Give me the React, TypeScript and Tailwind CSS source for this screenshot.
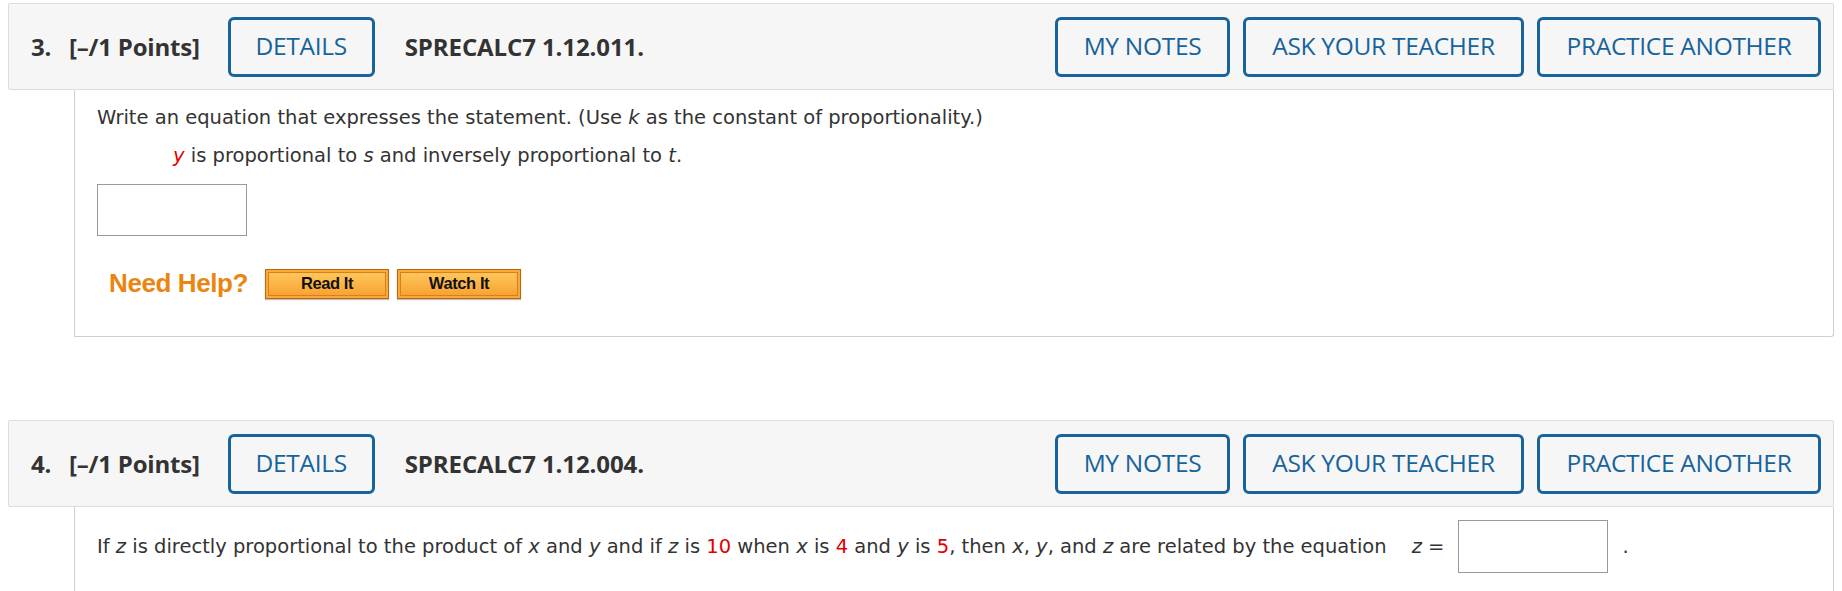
import React from 'react';

const blue = 'border-[#17639b] text-[#17639b]';

function HeaderButton({ label, w }: { label: string; w: string }) {
  return (
    <div
      className={`${w} h-[60px] shrink-0 flex items-center justify-center border-[3px] ${blue} rounded-[6px] bg-[#f6f6f6] text-[24.5px] font-medium font-['Open_Sans',sans-serif] tracking-[-0.3px]`}
    >
      {label}
    </div>
  );
}

function QuestionHeader({ num, code }: { num: string; code: string }) {
  return (
    <div className="h-[87px] flex items-center border border-[#dddddd] bg-[#f6f6f6] rounded-[2px] pl-[22px] pr-[12px] font-['Open_Sans',sans-serif] text-[#333333]">
      <span className="text-[24px] font-bold tracking-[-0.3px] w-[38px]">{num}</span>
      <span className="text-[24px] font-bold tracking-[-0.2px]">[–/1 Points]</span>
      <div className="ml-[28px]">
        <HeaderButton label="DETAILS" w="w-[147px]" />
      </div>
      <span className="ml-[30px] text-[24px] font-bold tracking-[-0.1px]">{code}</span>
      <div className="flex-1" />
      <div className="flex gap-[13px]">
        <HeaderButton label="MY NOTES" w="w-[175px]" />
        <HeaderButton label="ASK YOUR TEACHER" w="w-[281px]" />
        <HeaderButton label="PRACTICE ANOTHER" w="w-[284px]" />
      </div>
    </div>
  );
}

function HelpButton({ label }: { label: string }) {
  return (
    <div className="w-[124px] h-[30px] border border-[#b8660f] bg-[#f9a93a] p-[2px] shadow-[0_1px_1px_rgba(0,0,0,0.25)]">
      <div className="w-full h-full border border-[#d9801b] bg-gradient-to-b from-[#ffc65a] to-[#f7a332] flex items-center justify-center text-[16.5px] font-bold text-[#111] font-['Liberation_Sans',Arial,sans-serif] tracking-[-0.4px]">
        {label}
      </div>
    </div>
  );
}

const red = 'text-[#e00000]';

export default function App() {
  return (
    <div className="w-[1842px] h-[591px] overflow-hidden bg-white pt-[3px] px-[8px] font-['DejaVu_Sans',Verdana,sans-serif] text-[#333333]">
      {/* Question 3 */}
      <QuestionHeader num="3." code="SPRECALC7 1.12.011." />
      <div className="ml-[66px] border-l border-r border-b border-[#cfcfcf] rounded-br-[3px] pl-[22px] pt-[14px] pb-[33px] text-[19.5px]">
        <div className="leading-[28px]">
          Write an equation that expresses the statement. (Use <i>k</i> as the constant of proportionality.)
        </div>
        <div className="leading-[28px] mt-[10px] pl-[76px]">
          <i className={red}>y</i> is proportional to <i>s</i> and inversely proportional to <i>t</i>.
        </div>
        <div className="mt-[14px] w-[150px] h-[52px] border border-[#999999] bg-white" />
        <div className="mt-[28px] flex items-center ml-[12px]">
          <span className="text-[26px] font-bold text-[#ea8510] font-['Liberation_Sans',Arial,sans-serif] tracking-[-0.4px] mr-[17px]">
            Need Help?
          </span>
          <HelpButton label="Read It" />
          <div className="w-[8px]" />
          <HelpButton label="Watch It" />
        </div>
      </div>

      {/* Question 4 */}
      <div className="h-[83px]" />
      <QuestionHeader num="4." code="SPRECALC7 1.12.004." />
      <div className="ml-[66px] border-l border-r border-[#cfcfcf] pl-[22px] pt-[13px] h-[120px] text-[19.5px]">
        <div className="flex items-center">
          <span className="leading-[28px] whitespace-nowrap">
            If <i>z</i> is directly proportional to the product of <i>x</i> and <i>y</i> and if <i>z</i> is{' '}
            <span className={red}>10</span> when <i>x</i> is <span className={red}>4</span> and <i>y</i> is{' '}
            <span className={red}>5</span>, then <i>x</i>, <i>y</i>, and <i>z</i> are related by the equation
          </span>
          <span className="ml-[25px] leading-[28px] whitespace-nowrap">
            <i>z</i> =
          </span>
          <div className="ml-[14px] w-[150px] h-[53px] shrink-0 border border-[#999999] bg-white" />
          <span className="ml-[14px] leading-[28px]">.</span>
        </div>
      </div>
    </div>
  );
}
